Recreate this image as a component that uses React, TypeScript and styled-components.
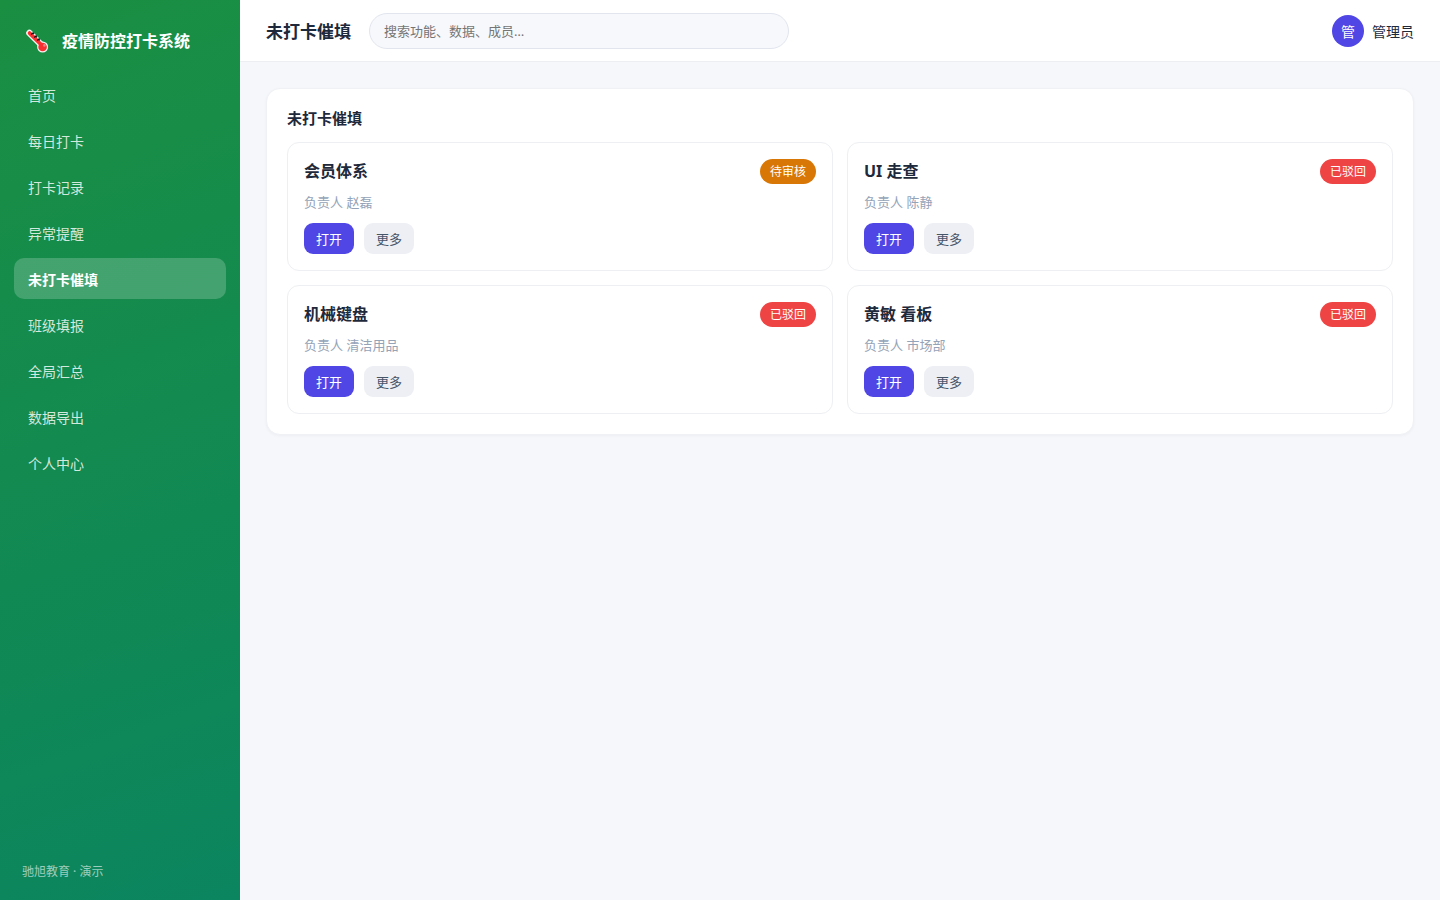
import React from "react";
import styled, { createGlobalStyle } from "styled-components";

const GlobalStyle = createGlobalStyle`
  * { box-sizing: border-box; }
  body {
    margin: 0;
    background: #f5f7fb;
    color: #1e293b;
    font-family: "Noto Sans", "Noto Sans CJK SC", sans-serif;
    font-size: 14px;
  }
  button, input { font-family: inherit; }
`;

const Shell = styled.div`
  display: flex;
  min-height: 100vh;
`;

const Sidebar = styled.aside`
  display: flex;
  flex-direction: column;
  flex: none;
  width: 240px;
  padding: 22px 14px 18px;
  background: linear-gradient(160deg, #1a8f42, #0b855f);
  color: #fff;
`;

const Brand = styled.div`
  display: flex;
  align-items: center;
  gap: 12px;
  height: 36px;
  padding: 0 10px;
  margin-bottom: 16px;
  font-size: 16px;
  font-weight: 700;
  white-space: nowrap;
`;

const BrandIcon = styled.svg`
  flex: none;
  width: 26px;
  height: 26px;
`;

const Nav = styled.nav`
  display: flex;
  flex-direction: column;
  gap: 5px;
`;

const NavLink = styled.a<{ $active: boolean }>`
  display: flex;
  align-items: center;
  height: 41px;
  padding: 0 14px;
  border-radius: 10px;
  background: ${(p) => (p.$active ? "rgba(255, 255, 255, 0.2)" : "transparent")};
  color: ${(p) => (p.$active ? "#fff" : "rgba(255, 255, 255, 0.82)")};
  font-weight: ${(p) => (p.$active ? 700 : 400)};
  text-decoration: none;
`;

const SidebarFooter = styled.footer`
  margin-top: auto;
  padding: 0 8px;
  color: rgba(255, 255, 255, 0.6);
  font-size: 12px;
  line-height: 20px;
`;

const Main = styled.div`
  flex: 1;
  min-width: 0;
`;

const Topbar = styled.header`
  display: flex;
  align-items: center;
  gap: 18px;
  height: 62px;
  padding: 0 26px;
  background: #fff;
  border-bottom: 1px solid #eceef2;
`;

const PageTitle = styled.h1`
  margin: 0;
  font-size: 17px;
  font-weight: 700;
  white-space: nowrap;
`;

const Search = styled.input`
  width: 420px;
  height: 36px;
  padding: 0 14px;
  border: 1px solid #e2e5ee;
  border-radius: 18px;
  background: #f7f8fc;
  color: #1e293b;
  font-size: 13px;
  &::placeholder { color: #757575; }
`;

const User = styled.div`
  display: flex;
  align-items: center;
  gap: 8px;
  margin-left: auto;
  white-space: nowrap;
`;

const Avatar = styled.span`
  display: grid;
  place-items: center;
  width: 32px;
  height: 32px;
  border-radius: 50%;
  background: #4f46e5;
  color: #fff;
`;

const Content = styled.main`
  padding: 26px;
`;

const Panel = styled.section`
  padding: 20px;
  border: 1px solid #f0f1f5;
  border-radius: 14px;
  background: #fff;
  box-shadow: 0 1px 3px rgba(15, 23, 42, 0.04);
`;

const PanelTitle = styled.h2`
  margin: 0 0 14px;
  font-size: 15px;
  font-weight: 700;
  line-height: 19px;
`;

const Grid = styled.div`
  display: grid;
  grid-template-columns: repeat(2, minmax(0, 1fr));
  gap: 14px;
`;

const Card = styled.article`
  padding: 16px;
  border: 1px solid #eeeff2;
  border-radius: 12px;
`;

const CardHead = styled.div`
  display: flex;
  align-items: center;
  justify-content: space-between;
  height: 25px;
`;

const CardTitle = styled.h3`
  margin: 0;
  font-size: 16px;
  font-weight: 700;
  line-height: 25px;
`;

const Badge = styled.span<{ $color: string }>`
  padding: 0 10px;
  border-radius: 13px;
  background: ${(p) => p.$color};
  color: #fff;
  font-size: 12px;
  line-height: 25px;
`;

const Meta = styled.p`
  margin: 8px 0 10px;
  color: #94a3b8;
  font-size: 13px;
  line-height: 21px;
`;

const Actions = styled.div`
  display: flex;
  gap: 10px;
`;

const Button = styled.button<{ $primary?: boolean }>`
  height: 31px;
  padding: 0 12px;
  border: 0;
  border-radius: 9px;
  background: ${(p) => (p.$primary ? "#4f46e5" : "#eeeff4")};
  color: ${(p) => (p.$primary ? "#fff" : "#475569")};
  font-size: 13px;
  cursor: pointer;
`;

const navItems = [
  "首页",
  "每日打卡",
  "打卡记录",
  "异常提醒",
  "未打卡催填",
  "班级填报",
  "全局汇总",
  "数据导出",
  "个人中心",
];

const PENDING = "#d97706";
const REJECTED = "#ef4444";

const cards = [
  { title: "会员体系", owner: "赵磊", status: "待审核", color: PENDING },
  { title: "UI 走查", owner: "陈静", status: "已驳回", color: REJECTED },
  { title: "机械键盘", owner: "清洁用品", status: "已驳回", color: REJECTED },
  { title: "黄敏 看板", owner: "市场部", status: "已驳回", color: REJECTED },
];

const Thermometer = () => (
  <BrandIcon viewBox="0 0 26 26" aria-hidden="true">
    <path d="M5.4 5.9L17.5 18" stroke="#f5f5f5" strokeWidth="6.4" strokeLinecap="round" />
    <circle cx="18.6" cy="20" r="5.5" fill="#f5f5f5" />
    <path d="M5.6 6.1L17.5 18" stroke="#fa2f2f" strokeWidth="3.8" strokeLinecap="round" />
    <circle cx="18.6" cy="20" r="4.3" fill="#fa2f2f" />
    <path
      d="M7.2 7.6L9.6 5.6M10.2 10.6L12.6 8.4M13.2 13.6L15.6 11.4M8.6 5.8L10 7M11.4 8.8L13 10.4M14.4 11.8L15.8 13.4"
      stroke="#151515"
      strokeWidth="1.3"
    />
    <circle cx="20.4" cy="18.4" r="1.3" fill="#ff8080" />
  </BrandIcon>
);

export default function App() {
  return (
    <>
      <GlobalStyle />
      <Shell>
        <Sidebar>
          <Brand>
            <Thermometer />
            疫情防控打卡系统
          </Brand>
          <Nav>
            {navItems.map((item) => (
              <NavLink key={item} href="#" $active={item === "未打卡催填"}>
                {item}
              </NavLink>
            ))}
          </Nav>
          <SidebarFooter>驰旭教育 · 演示</SidebarFooter>
        </Sidebar>
        <Main>
          <Topbar>
            <PageTitle>未打卡催填</PageTitle>
            <Search type="search" aria-label="搜索" placeholder="搜索功能、数据、成员…" />
            <User>
              <Avatar>管</Avatar>
              管理员
            </User>
          </Topbar>
          <Content>
            <Panel>
              <PanelTitle>未打卡催填</PanelTitle>
              <Grid>
                {cards.map((card) => (
                  <Card key={card.title}>
                    <CardHead>
                      <CardTitle>{card.title}</CardTitle>
                      <Badge $color={card.color}>{card.status}</Badge>
                    </CardHead>
                    <Meta>负责人 {card.owner}</Meta>
                    <Actions>
                      <Button type="button" $primary>打开</Button>
                      <Button type="button">更多</Button>
                    </Actions>
                  </Card>
                ))}
              </Grid>
            </Panel>
          </Content>
        </Main>
      </Shell>
    </>
  );
}
